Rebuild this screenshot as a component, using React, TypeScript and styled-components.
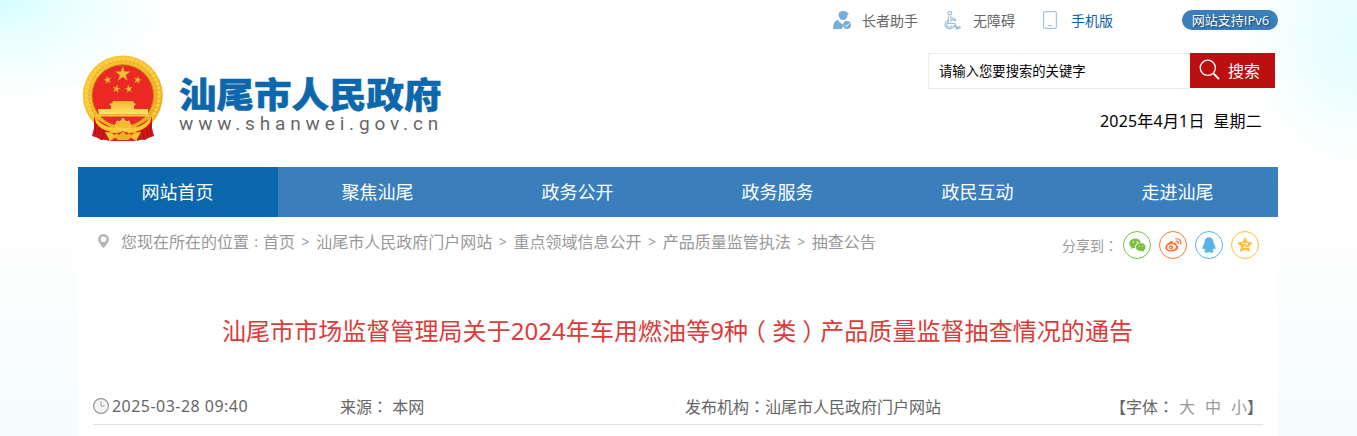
import React from "react";
import styled, { createGlobalStyle } from "styled-components";

const GlobalStyle = createGlobalStyle`
  * { box-sizing: border-box; }
  body {
    margin: 0;
    overflow: hidden;
    font-family: "Noto Sans", "Noto Sans CJK SC", sans-serif;
    font-size: 16px;
    color: #666;
  }
`;

const Page = styled.div`
  height: 436px;
  background:
    radial-gradient(ellipse 170px 100px at 0 0, #d4feff 0%, #e9ffff 35%, rgba(255, 255, 255, 0) 100%),
    radial-gradient(ellipse 110px 130px at 1357px 35px, #e4feff 0%, #effeff 50%, rgba(255, 255, 255, 0) 100%),
    linear-gradient(#fff 0, #fefefe 240px, #f5fcfe 436px);
`;

const Container = styled.div`
  width: 1200px;
  margin: 0 auto 0 78px;
`;

const Header = styled.header`
  height: 167px;
  display: flex;
  justify-content: space-between;
`;

const Brand = styled.div`
  display: flex;
  padding: 54px 0 0 4px;
`;

const BrandText = styled.div`
  padding-left: 15px;
  width: 300px;
`;

const SiteName = styled.div`
  margin-top: 19px;
  height: 40px;
  line-height: 40px;
  font-family: "Noto Sans CJK SC", sans-serif;
  font-size: 37.5px;
  font-weight: 900;
  color: #0c67ac;
  -webkit-text-stroke: 0.5px #0c67ac;
  white-space: nowrap;
  transform: scaleY(0.95);
`;

const SiteUrl = styled.div`
  height: 22px;
  line-height: 22px;
  font-family: Roboto, sans-serif;
  font-size: 19px;
  letter-spacing: 4.85px;
  color: #666;
  white-space: nowrap;
`;

const HeaderSide = styled.div`
  width: 446px;
  display: flex;
  flex-direction: column;
`;

const TopLinks = styled.div`
  display: flex;
  align-items: center;
  height: 40px;
  font-size: 14px;
`;

const TopLink = styled.a<{ $width: number; $gap: number; $color?: string }>`
  display: flex;
  align-items: center;
  width: ${(p) => p.$width}px;
  gap: ${(p) => p.$gap}px;
  color: ${(p) => p.$color ?? "#666"};
  white-space: nowrap;
`;

const Ipv6 = styled.span`
  width: 96px;
  height: 20px;
  margin-left: auto;
  padding-left: 1px;
  border-radius: 10px;
  background: #3a7fbc;
  color: #fff;
  font-family: "Open Sans", "Noto Sans CJK SC", sans-serif;
  font-size: 13px;
  line-height: 20px;
  text-align: center;
  text-shadow: 1px 1px 2px #113a5e;
`;

const Search = styled.form`
  display: flex;
  margin: 13px 3px 0 96px;
  height: 36px;
`;

const SearchField = styled.div`
  flex: 1;
  padding-left: 10px;
  border: 1px solid #ebebeb;
  border-right: 0;
  background: #fff;
  color: #000;
  font-size: 13.33px;
  line-height: 34px;
`;

const SearchButton = styled.div`
  display: flex;
  align-items: center;
  width: 85px;
  height: 35px;
  padding: 0 0 1px 9px;
  gap: 8px;
  background: #bb0f10;
  color: #fff;
`;

const Today = styled.div`
  margin: 20px 16px 0 0;
  line-height: 24px;
  text-align: right;
  color: #000;
  letter-spacing: 0.2px;
  white-space: pre;
`;

const Nav = styled.nav`
  display: grid;
  grid-template-columns: repeat(6, 1fr);
  height: 50px;
  background: #3a7fbc;
`;

const NavItem = styled.a<{ $active?: boolean }>`
  height: 50px;
  padding-right: 1px;
  background: ${(p) => (p.$active ? "#0c67ac" : "transparent")};
  color: #fff;
  font-size: 18px;
  line-height: 51px;
  text-align: center;
`;

const Body = styled.main`
  height: 219px;
  background: #fff;
`;

const CrumbRow = styled.div`
  display: flex;
  justify-content: space-between;
  height: 56px;
  padding: 0 19px 0 20px;
  color: #999;
`;

const Crumbs = styled.div`
  display: flex;
  align-items: center;
  height: 48px;
  white-space: nowrap;
`;

const Pin = styled.svg`
  margin: 0 12px 0 0;
`;

const Mark = styled.span<{ $width: number }>`
  width: ${(p) => p.$width}px;
  text-align: center;
  font-size: 14px;
`;

const Share = styled.div`
  display: flex;
  align-items: center;
  gap: 8px;
  font-size: 14px;
`;

const ShareLabel = styled.span`
  margin-right: -3px;
`;

const Round = styled.a<{ $color: string }>`
  display: flex;
  align-items: center;
  justify-content: center;
  width: 28px;
  height: 28px;
  border: 1.5px solid ${(p) => p.$color};
  border-radius: 50%;
  color: ${(p) => p.$color};
`;

const Title = styled.h1`
  margin: 39px 0 0;
  padding-right: 1px;
  height: 36px;
  line-height: 36px;
  font-size: 24px;
  font-weight: 400;
  text-align: center;
  color: #de3a3a;
  letter-spacing: 0.06px;
  white-space: nowrap;
`;

const Wide = styled.span`
  font-family: "Noto Sans CJK TC", sans-serif;
`;

const Paren = styled.span`
  padding: 0 0.25em;
  font-family: "Noto Sans CJK SC", sans-serif;
  font-feature-settings: "halt";
`;

const Meta = styled.div`
  display: grid;
  grid-template-columns: 247px 345px 1fr auto;
  align-items: center;
  height: 37px;
  margin: 40px 15px 0;
  border-bottom: 1px solid #e2e2e2;
  white-space: pre;
`;

const Published = styled.span`
  display: flex;
  align-items: center;
  gap: 3px;
  letter-spacing: 0.47px;
`;

const FontSize = styled.span`
  display: flex;
`;

const SizeLabel = styled.span`
  margin-right: 5px;
`;

const SizeOption = styled.a`
  width: 26px;
  color: #999;
  &:last-of-type { width: 16px; }
`;

const star = (cx: number, cy: number, r: number, turn = 0, inner = 0.39) =>
  Array.from({ length: 10 }, (_, i) => {
    const a = ((i * 36 - 90 + turn) * Math.PI) / 180;
    const k = i % 2 ? r * inner : r;
    return `${cx + k * Math.cos(a)},${cy + k * Math.sin(a)}`;
  }).join(" ");

const Emblem = () => (
  <svg width="82" height="88" viewBox="0 0 82 88">
    <defs>
      <linearGradient id="gold" x1="0" y1="0" x2="1" y2="1">
        <stop offset="0" stopColor="#f9c93a" />
        <stop offset=".45" stopColor="#f6bd2c" />
        <stop offset="1" stopColor="#e6a81d" />
      </linearGradient>
      <linearGradient id="gate" x1="0" y1="0" x2="0" y2="1">
        <stop offset="0" stopColor="#f4b52c" />
        <stop offset="1" stopColor="#ffe36c" />
      </linearGradient>
    </defs>
    <circle cx="40.8" cy="41.500" r="40" fill="url(#gold)" />
    <circle cx="40.8" cy="41" r="36.500" fill="none" stroke="#fdd348" strokeWidth="3" strokeDasharray="3 1.500" />
    <circle cx="40.8" cy="41" r="33.500" fill="none" stroke="#e9aa22" strokeWidth="1.200" strokeDasharray="2 2" />
    <circle cx="40.8" cy="41.500" r="30.800" fill="#ec2824" stroke="#c58b18" strokeWidth="1" />
    <g fill="#f5bd37" stroke="#c8851b" strokeWidth=".4">
      <polygon points={star(40.8, 20, 8)} />
      <polygon points={star(25.6, 26, 4, -15)} />
      <polygon points={star(55.6, 26, 4, 15)} />
      <polygon points={star(34.5, 35, 4, 12)} />
      <polygon points={star(46.8, 35, 4, -12)} />
    </g>
    <path d="M31 47h20l1 2 2 1-2 2v3H29v-3l-2-2 3-1zM16 55h50v5.500H17z" fill="url(#gate)" />
    <path d="M14 60.500h53v2H15z" fill="#f8ce3c" />
    <path d="M12 62q2 3 9 7l7 4-1 14q-4-2-8-1-4-3-9-4l2-8zM70 62q-2 3-9 7l-7 4 1 14q4-2 8-1 4-3 9-4l-2-8z" fill="#d31519" />
    <path d="M14 68l-1 13M18 71l-2 12M68 68l1 13M64 71l2 12M22 74l-2 11M60 74l2 11" stroke="#a90e12" strokeWidth="1" />
    <path d="M12 61q8 13 23 13l2-2h8l2 2q15 0 23-13l-2 8q-7 9-20 9l-7-2-7 2q-14 0-20-9z" fill="#fac931" />
    <path d="M33 72l2-5 3 1 3-4 3 4 3-1 2 5-4 3h-8z" fill="#f6bb28" stroke="#ffe17c" strokeWidth=".8" />
    <path d="M25 78q8 3 16-1 8 4 16 1l-3 9H28z" fill="#e3251f" />
    <path d="M23 78q8 0 11 5l-6 4zM59 78q-8 0-11 5l6 4z" fill="#f8c52d" />
    <path d="M31 82l4-3 2 2 4-4 4 4 2-2 4 3-5 4H36z" fill="#edb323" />
  </svg>
);

const ElderIcon = () => (
  <svg width="19" height="19" viewBox="0 0 19 19" fill="#78add8">
    <path d="M6.500 4q0-4 5-4 3 0 4.500 2l1 .6-1.500 1v1.500q-1 4-4.500 4-3.500-.1-4.500-5.100zM5.500 9q1 0 2 2l4 3-1.500 4H1q0-8 4.500-9z" />
    <circle cx="15" cy="14" r="3.900" />
    <path d="M13 14l1.500 1.500 2.600-3" fill="none" stroke="#fff" />
  </svg>
);

const WheelchairIcon = () => (
  <svg width="17" height="19" viewBox="0 0 17 19" fill="none" stroke="#98bfde" strokeWidth="1.150" strokeLinejoin="round">
    <circle cx="5.800" cy="2.300" r="1.800" />
    <path d="M4.400 5.200v7.300h6.400l2.400 4.200 2.600-1.100.6 1.200-3.700 1.500-2.600-4.400M6.900 5.200v1.700l4.500 1.400v1.400L6.900 8.700v2.400" />
    <path d="M4 9.200C.7 10.500 0 14 2.100 16.300c2.500 2.700 7.300 1.700 8.300-2M4 11.300c-1.700 1-1.700 3.500-.2 4.500 1.600 1 3.700.3 4.500-1.300" />
  </svg>
);

const PhoneIcon = () => (
  <svg width="14" height="18" viewBox="0 0 14 18" fill="none" stroke="#a1c5e3" strokeWidth="1.200">
    <rect x=".6" y=".6" width="12.800" height="16.800" rx="1.500" />
    <path d="M5 14.500h4" />
  </svg>
);

const SearchIcon = () => (
  <svg width="21" height="22" viewBox="0 0 21 22" fill="none" stroke="#fff" strokeWidth="1.300">
    <circle cx="8.800" cy="8.800" r="7.600" />
    <path d="M14.500 14.500l5.500 5.700" strokeWidth="1.900" />
  </svg>
);

const ClockIcon = () => (
  <svg width="16" height="16" viewBox="0 0 16 16" fill="#f5f5f5" stroke="#999">
    <circle cx="8" cy="8" r="7.400" strokeWidth="1.200" />
    <path d="M8 3.500V8h3.500" />
  </svg>
);

const WechatIcon = () => (
  <svg width="17" height="15" viewBox="0 0 17 15" fill="currentColor">
    <path d="M6.200.5C2.800.5.3 2.700.3 5.400c0 1.500.8 2.900 2.100 3.800L1.900 11l2.200-1 2 .3C5.600 7 8 4.400 12 4.300 11.400 2 9 .5 6.200.5z" />
    <path d="M11.800 5c-2.800 0-4.900 1.800-4.900 4.100 0 2.500 2.400 4.200 5 4.200l1.500-.2 1.900 1-.5-1.700c1.100-.8 1.800-1.900 1.800-3.200C16.600 6.900 14.500 5 11.800 5z" />
    <g fill="#fff"><circle cx="4.200" cy="4" r=".75" /><circle cx="8.200" cy="4" r=".75" /><circle cx="10.300" cy="8" r=".6" /><circle cx="13.500" cy="8" r=".6" /></g>
  </svg>
);

const WeiboIcon = () => (
  <svg width="17" height="14" viewBox="0 0 17 14" fill="currentColor">
    <path d="M6.500 3C4.300 3.600.2 7 .2 9.700c0 2.400 3.100 3.900 6.300 3.900 4 0 6.900-2.200 6.900-4.300 0-1.300-1-2-2-2.300.6-2-.7-2.700-3.200-1.800C8.700 3.500 8.100 2.600 6.500 3z" />
    <ellipse cx="6.500" cy="9.200" rx="4.400" ry="2.900" fill="#fff" transform="rotate(-8 6.500 9.200)" />
    <circle cx="6" cy="9.400" r="2.200" /><circle cx="5.500" cy="9.700" r=".8" fill="#fff" />
    <path d="M10.700.9c3.500-.8 5.900 2 4.900 5.100M11 3.300c1.700-.4 2.800.9 2.300 2.300" fill="none" stroke="currentColor" strokeWidth="1.200" strokeLinecap="round" />
  </svg>
);

const QqIcon = () => (
  <svg width="14" height="16" viewBox="0 0 14 16" fill="currentColor">
    <path d="M7 .3c-2.900 0-4.500 2-4.400 5L1 9C.4 10.400.3 12 .8 12.300c.4.2 1-.4 1.400-1 .2.800.6 1.500 1.300 2.100-1.700.7-1.200 2.300 1 2.300 1 0 1.900-.2 2.500-.6.600.4 1.500.6 2.500.6 2.200 0 2.700-1.600 1-2.300.7-.6 1.100-1.300 1.300-2.100.4.600 1 1.200 1.400 1 .5-.3.4-1.900-.2-3.300l-1.600-3.700C11.500 2.300 9.900.3 7 .3z" />
  </svg>
);

const QzoneIcon = () => (
  <svg width="16" height="16" viewBox="0 0 16 16">
    <polygon points={star(8, 8.3, 7.5, 0, 0.5)} fill="currentColor" stroke="currentColor" strokeWidth="1" strokeLinejoin="round" />
    <path d="M5 6.500q3-.6 6 0l-4.500 3.800q2.500.5 5.500-.1" fill="none" stroke="#fff" strokeWidth=".9" />
  </svg>
);

const navItems = ["网站首页", "聚焦汕尾", "政务公开", "政务服务", "政民互动", "走进汕尾"];
const crumbs = ["首页", "汕尾市人民政府门户网站", "重点领域信息公开", "产品质量监管执法", "抽查公告"];

export default function App() {
  return (
    <Page>
      <GlobalStyle />
      <Container>
        <Header>
          <Brand>
            <Emblem />
            <BrandText>
              <SiteName>汕尾市人民政府</SiteName>
              <SiteUrl>www.shanwei.gov.cn</SiteUrl>
            </BrandText>
          </Brand>
          <HeaderSide>
            <TopLinks>
              <TopLink $width={112} $gap={11}><ElderIcon />长者助手</TopLink>
              <TopLink $width={99} $gap={12}><WheelchairIcon />无障碍</TopLink>
              <TopLink $width={70} $gap={14} $color="#0c5fa5"><PhoneIcon />手机版</TopLink>
              <Ipv6>网站支持IPv6</Ipv6>
            </TopLinks>
            <Search>
              <SearchField>请输入您要搜索的关键字</SearchField>
              <SearchButton><SearchIcon />搜索</SearchButton>
            </Search>
            <Today>{"2025年4月1日  星期二"}</Today>
          </HeaderSide>
        </Header>
        <Nav>
          {navItems.map((label, i) => (
            <NavItem key={label} $active={i === 0}>{label}</NavItem>
          ))}
        </Nav>
        <Body>
          <CrumbRow>
            <Crumbs>
              <Pin width="11" height="14" viewBox="0 0 11 14">
                <path fillRule="evenodd" fill="#b5b5b5" d="M5.500 0A5.400 5.400 0 0 0 .1 5.400C.1 8.500 5.500 14 5.500 14s5.400-5.500 5.400-8.600A5.400 5.400 0 0 0 5.500 0zm0 2.500a2.800 2.800 0 1 1 0 5.600 2.800 2.800 0 0 1 0-5.600z" />
              </Pin>
              <span>您现在所在的位置</span>
              <Mark $width={14}>:</Mark>
              {crumbs.map((name, i) => (
                <React.Fragment key={name}>
                  {i > 0 && <Mark $width={21.2}>&gt;</Mark>}
                  <span>{name}</span>
                </React.Fragment>
              ))}
            </Crumbs>
            <Share>
              <ShareLabel>分享到<Wide>：</Wide></ShareLabel>
              <Round $color="#7ac143"><WechatIcon /></Round>
              <Round $color="#ff763b"><WeiboIcon /></Round>
              <Round $color="#56b6e7"><QqIcon /></Round>
              <Round $color="#fdbe3d"><QzoneIcon /></Round>
            </Share>
          </CrumbRow>
          <Title>汕尾市市场监督管理局关于2024年车用燃油等9种<Paren>（</Paren>类<Paren>）</Paren>产品质量监督抽查情况的通告</Title>
          <Meta>
            <Published><ClockIcon />2025-03-28 09:40</Published>
            <span>来源<Wide>：</Wide> 本网</span>
            <span>发布机构<Wide>：</Wide>汕尾市人民政府门户网站</span>
            <FontSize>
              <SizeLabel>【字体<Wide>：</Wide></SizeLabel>
              <SizeOption>大</SizeOption>
              <SizeOption>中</SizeOption>
              <SizeOption>小</SizeOption>】
            </FontSize>
          </Meta>
        </Body>
      </Container>
    </Page>
  );
}
